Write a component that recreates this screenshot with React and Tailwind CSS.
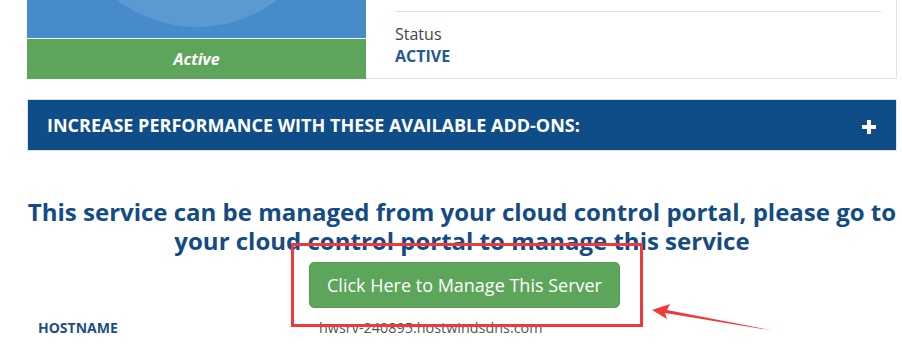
export default function App() {
  return (
    <div className="relative w-[902px] h-[356px] overflow-hidden bg-white font-['Open_Sans',sans-serif]">
      <div className="ml-[27px] w-[870px]">
        {/* Service card */}
        <div className="flex h-[79px]">
          <div className="w-[339px] flex flex-col">
            <div className="relative h-[38px] overflow-hidden bg-[#468bca]">
              <div className="absolute left-[38px] top-[-237px] w-[264px] h-[264px] rounded-full bg-[#5a9ad0]" />
            </div>
            <div className="mt-px h-[40px] bg-[#5ca55a] flex items-center justify-center">
              <span className="text-white text-[16px] font-bold italic leading-none">Active</span>
            </div>
          </div>
          <div className="flex-1 border-r border-b border-[#dde2e8] pl-[29px] pr-[15px]">
            <div className="mt-[11px] border-t border-[#dde2e8]" />
            <div className="mt-[11px] text-[16px] leading-[22px] text-[#444]">Status</div>
            <div className="text-[16px] leading-[22px] font-bold text-[#235a95]">ACTIVE</div>
          </div>
        </div>

        {/* Add-ons panel */}
        <div className="mt-[20px] h-[52px] border border-[#dde2e8] bg-[#0f4d89] flex items-center justify-between pl-[19px] pr-[20px]">
          <span className="text-white text-[18px] font-bold leading-none">INCREASE PERFORMANCE WITH THESE AVAILABLE ADD-ONS:</span>
          <svg width="14" height="14" viewBox="0 0 14 14" className="mt-[4px]">
            <rect x="5" y="0" width="4" height="14" fill="#fff" />
            <rect x="0" y="5" width="14" height="4" fill="#fff" />
          </svg>
        </div>

        {/* Heading */}
        <div className="mt-[46px] text-center text-[24px] leading-[29px] font-bold text-[#134b85]">
          This service can be managed from your cloud control portal, please go to<br />your cloud control portal to manage this service
        </div>

        {/* Button */}
        <div className="mt-[7px] flex justify-center">
          <button className="ml-[5px] w-[311px] h-[46px] rounded-[5px] bg-[#5ca55a] border border-[#549d52] text-white text-[18px]">
            Click Here to Manage This Server
          </button>
        </div>

        {/* Hostname row */}
        <div className="mt-[9px] flex items-baseline">
          <div className="w-[292px] pl-[11px] text-[14px] font-bold text-[#1d4f82]">HOSTNAME</div>
          <div className="text-[14.4px] text-[#555]">hwsrv-240895.hostwindsdns.com</div>
        </div>
      </div>

      {/* Annotation: red box */}
      <div className="absolute left-[291px] top-[243px] w-[352px] h-[84px] border-[3px] border-[#f03a3a]" />

      {/* Annotation: arrow */}
      <svg className="absolute left-0 top-0" width="902" height="356" viewBox="0 0 902 356">
        <polygon points="652,310 670,304 667,310 775,331 665,313 667,319" fill="#f03a3a" />
      </svg>
    </div>
  );
}
